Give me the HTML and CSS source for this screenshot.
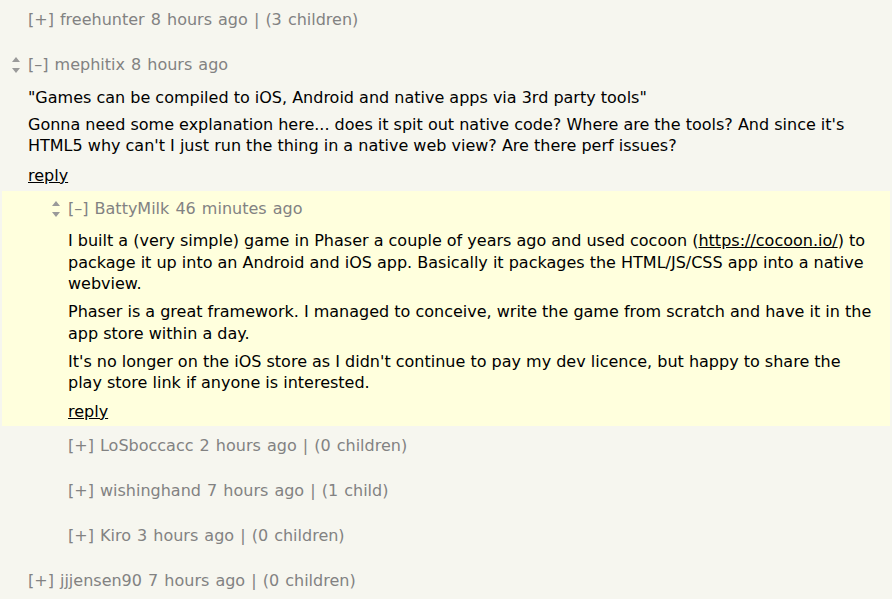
FILE: index.html
```html
<!DOCTYPE html>
<html>
<head>
<meta charset="utf-8">
<link rel="stylesheet" href="styles.css">
</head>
<body>
<div class="thread">
  <div class="row lvl0 first"><span class="head">[+] freehunter 8 hours ago | (3 children)</span></div>

  <div class="comment lvl0v">
    <div class="votes"><svg width="10" height="20" viewBox="0 0 10 20"><path d="M1 8 L5 3 L9 8 Z M1 14 L9 14 L5 19 Z" fill="#9a9a9a"/></svg></div>
    <div class="content">
      <div class="head">[–] mephitix 8 hours ago</div>
      <div class="text">
        <p>"Games can be compiled to iOS, Android and native apps via 3rd party tools"</p>
        <p>Gonna need some explanation here... does it spit out native code? Where are the tools? And since it's HTML5 why can't I just run the thing in a native web view? Are there perf issues?</p>
        <p class="reply"><a href="#">reply</a></p>
      </div>
    </div>
  </div>

  <div class="highlight">
    <div class="comment lvl1v">
      <div class="votes"><svg width="10" height="20" viewBox="0 0 10 20"><path d="M1 8 L5 3 L9 8 Z M1 14 L9 14 L5 19 Z" fill="#9a9a9a"/></svg></div>
      <div class="content">
        <div class="head">[–] BattyMilk 46 minutes ago</div>
        <div class="text">
          <p>I built a (very simple) game in Phaser a couple of years ago and used cocoon (<a href="#">https://cocoon.io/</a>) to package it up into an Android and iOS app. Basically it packages the HTML/JS/CSS app into a native webview.</p>
          <p>Phaser is a great framework. I managed to conceive, write the game from scratch and have it in the app store within a day.</p>
          <p>It's no longer on the iOS store as I didn't continue to pay my dev licence, but happy to share the play store link if anyone is interested.</p>
          <p class="reply"><a href="#">reply</a></p>
        </div>
      </div>
    </div>
  </div>

  <div class="row lvl1 after-hl"><span class="head">[+] LoSboccacc 2 hours ago | (0 children)</span></div>
  <div class="row lvl1"><span class="head">[+] wishinghand 7 hours ago | (1 child)</span></div>
  <div class="row lvl1"><span class="head">[+] Kiro 3 hours ago | (0 children)</span></div>
  <div class="row lvl0"><span class="head">[+] jjjensen90 7 hours ago | (0 children)</span></div>
</div>
</body>
</html>
```

FILE: styles.css
```css
html, body {
  margin: 0;
  padding: 0;
  background: #f6f6ef;
}
body {
  font-family: "DejaVu Sans", Verdana, sans-serif;
  font-size: 16px;
  line-height: 21.33px;
  color: #000;
  width: 892px;
  height: 599px;
  overflow: hidden;
}
.thread {
  padding-top: 9px;
}
.head {
  color: #828282;
  word-spacing: 1px;
}
.row {
  margin-top: 23.67px;
}
.row.first {
  margin-top: 0;
}
.row.after-hl {
  margin-top: 9px;
}
.lvl0 {
  padding-left: 28px;
}
.lvl1 {
  padding-left: 68px;
}
.comment {
  display: flex;
  align-items: flex-start;
}
.lvl0v {
  margin-top: 24px;
  padding-left: 11px;
}
.lvl1v {
  padding-left: 49px;
}
.votes {
  width: 10px;
  margin-right: 7px;
  display: flex;
}
.votes svg {
  display: block;
}
.content {
  flex: 1;
  padding-right: 14px;
}
.lvl0v .content {
  padding-right: 30px;
}
.text {
  margin-top: 11px;
}
.text p {
  margin: 0 0 6px 0;
}
.text p.reply {
  margin-top: 8px;
  margin-bottom: 0;
}
a {
  color: #000;
  text-decoration: underline;
}
.highlight {
  background: #ffffdd;
  margin: 5px 2px 0 2px;
  padding: 7px 0 4px 0;
}
.highlight .text p {
  margin-bottom: 7px;
}
.highlight .text p.reply {
  margin-top: 7px;
  margin-bottom: 0;
}
```
